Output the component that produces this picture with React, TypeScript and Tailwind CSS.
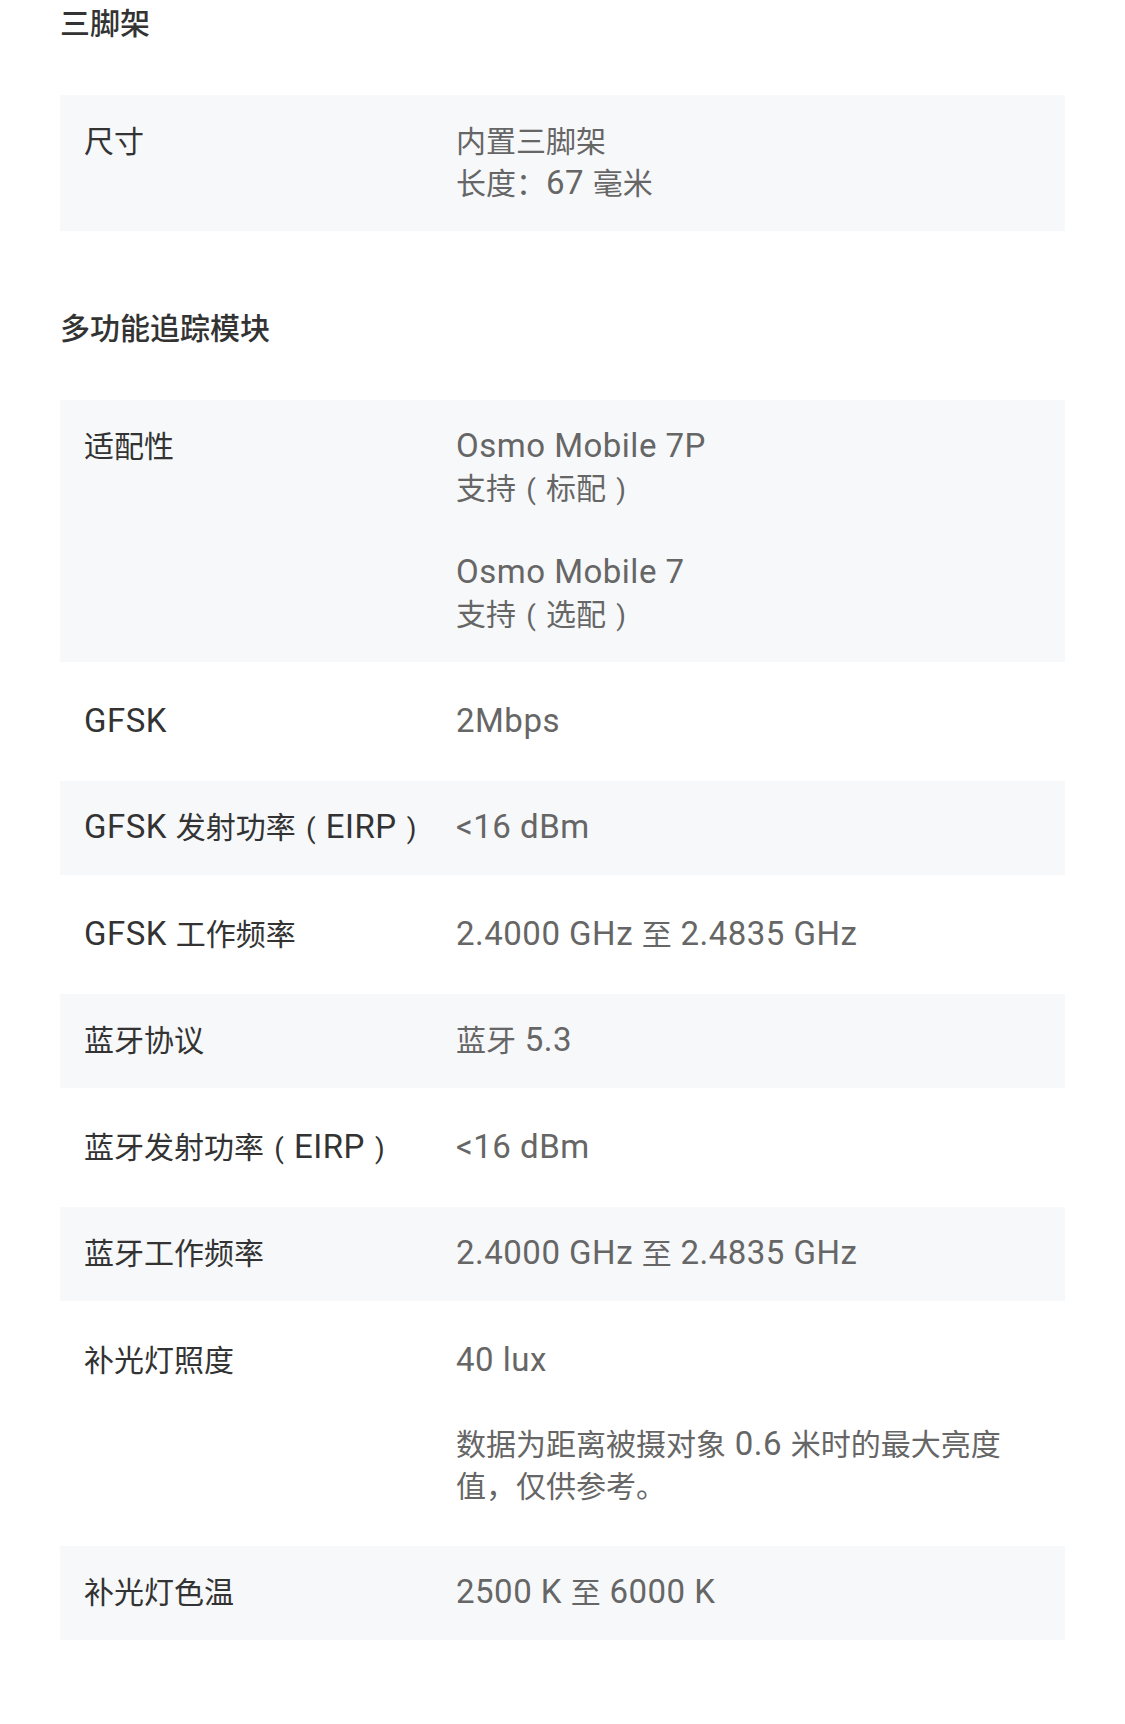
import React from "react";

type Row = { label: string; value: string[][] };

const tripod: Row[] = [{ label: "尺寸", value: [["内置三脚架", "长度：67 毫米"]] }];

const tracker: Row[] = [
  {
    label: "适配性",
    value: [
      ["Osmo Mobile 7P", "支持（标配）"],
      ["Osmo Mobile 7", "支持（选配）"],
    ],
  },
  { label: "GFSK", value: [["2Mbps"]] },
  { label: "GFSK 发射功率（EIRP）", value: [["<16 dBm"]] },
  { label: "GFSK 工作频率", value: [["2.4000 GHz 至 2.4835 GHz"]] },
  { label: "蓝牙协议", value: [["蓝牙 5.3"]] },
  { label: "蓝牙发射功率（EIRP）", value: [["<16 dBm"]] },
  { label: "蓝牙工作频率", value: [["2.4000 GHz 至 2.4835 GHz"]] },
  {
    label: "补光灯照度",
    value: [["40 lux"], ["数据为距离被摄对象 0.6 米时的最大亮度", "值，仅供参考。"]],
  },
  { label: "补光灯色温", value: [["2500 K 至 6000 K"]] },
];

function Txt({ s }: { s: string }) {
  const parts = s.split(/([（）]|[\x00-\x7F]+)/).filter((p) => p !== "");
  return (
    <>
      {parts.map((p, i) => {
        if (p === "（" || p === "）") {
          return (
            <span
              key={i}
              className="inline-block w-[30px] text-center text-[28px] leading-[40px] font-['Roboto',sans-serif]"
            >
              {p === "（" ? "(" : ")"}
            </span>
          );
        }
        if (/^[\x00-\x7F]+$/.test(p)) {
          return (
            <span
              key={i}
              className="text-[33px] leading-[39px] tracking-[0.5px] font-['Roboto',sans-serif]"
            >
              {p}
            </span>
          );
        }
        return <React.Fragment key={i}>{p}</React.Fragment>;
      })}
    </>
  );
}

function Table({ rows }: { rows: Row[] }) {
  return (
    <div className="flex flex-col gap-[12.5px]">
      {rows.map((r, i) => (
        <div
          key={i}
          className={
            i % 2 === 0
              ? "flex px-[24px] py-[26px] bg-[#f7f8fa]"
              : "flex px-[24px] py-[26px]"
          }
        >
          <div className="w-[372px] shrink-0 text-[#333333]">
            <Txt s={r.label} />
          </div>
          <div className="w-[555px] shrink-0 text-[#666666]">
            {r.value.map((para, j) => (
              <div key={j} className={j > 0 ? "mt-[42px]" : ""}>
                {para.map((line, k) => (
                  <div key={k} className="whitespace-nowrap">
                    <Txt s={line} />
                  </div>
                ))}
              </div>
            ))}
          </div>
        </div>
      ))}
    </div>
  );
}

export default function App() {
  return (
    <div className="min-h-screen bg-white px-[60px] pt-[3px] pb-[84px] text-[30px] leading-[42px] font-['Roboto','Noto_Sans_CJK_SC',sans-serif]">
      <section>
        <h2 className="font-medium text-[#333333]">三脚架</h2>
        <div className="mt-[50px]">
          <Table rows={tripod} />
        </div>
      </section>
      <section className="mt-[77px]">
        <h2 className="font-medium text-[#333333]">多功能追踪模块</h2>
        <div className="mt-[50px]">
          <Table rows={tracker} />
        </div>
      </section>
    </div>
  );
}
